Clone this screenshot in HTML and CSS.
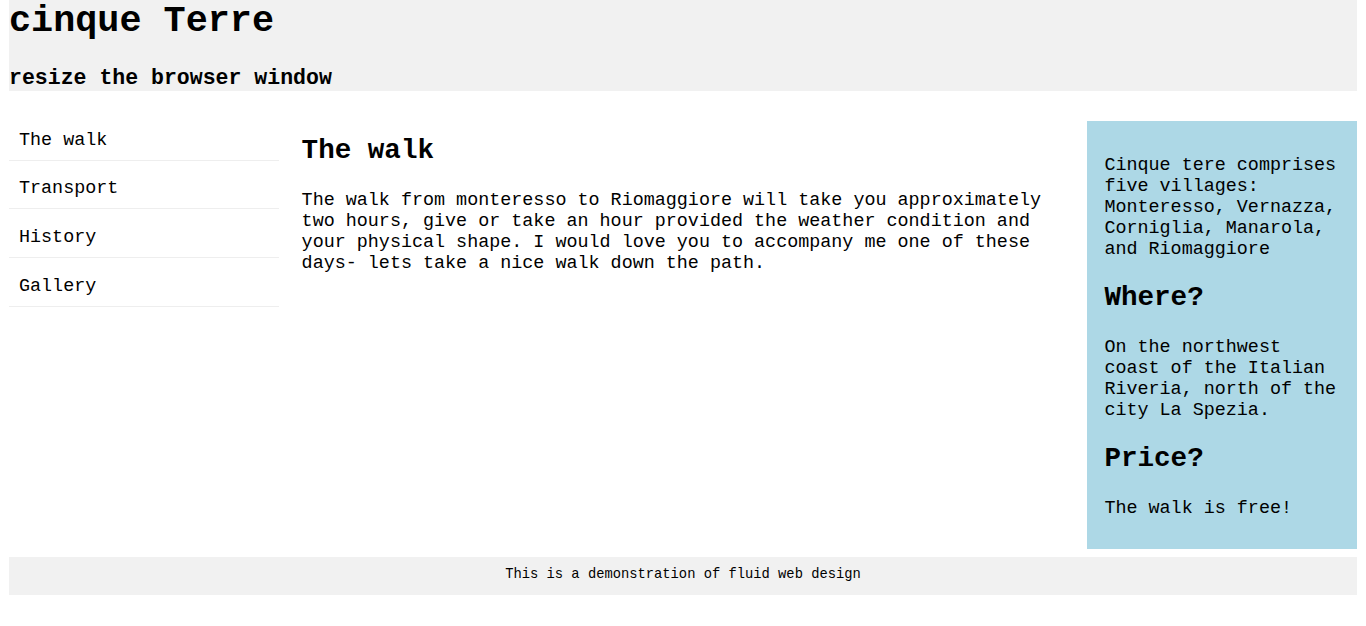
FILE: index.html
```
<!DOCTYPE html>
<html lang="en">
<head>
<meta charset="utf-8">
<title>Cinque Terre</title>
<link rel="stylesheet" href="styles.css">
</head>
<body>
<header class="header">
  <h1 class="title">cinque Terre</h1>
  <h3 class="subtitle">resize the browser window</h3>
</header>
<div class="row">
  <nav class="menu">
    <ul class="menu-list">
      <li class="menu-item">The walk</li>
      <li class="menu-item">Transport</li>
      <li class="menu-item">History</li>
      <li class="menu-item">Gallery</li>
    </ul>
  </nav>
  <main class="main">
    <h2 class="heading">The walk</h2>
    <p class="text">The walk from monteresso to Riomaggiore will take you approximately two hours, give or take an hour provided the weather condition and your physical shape. I would love you to accompany me one of these days- lets take a nice walk down the path.</p>
  </main>
  <aside class="aside">
    <p class="text">Cinque tere comprises five villages: Monteresso, Vernazza, Corniglia, Manarola, and Riomaggiore</p>
    <h2 class="heading">Where?</h2>
    <p class="text">On the northwest coast of the Italian Riveria, north of the city La Spezia.</p>
    <h2 class="heading">Price?</h2>
    <p class="text last">The walk is free!</p>
  </aside>
</div>
<footer class="footer">
  <p class="footer-text">This is a demonstration of fluid web design</p>
</footer>
</body>
</html>
```
FILE: styles.css
```
* {
  box-sizing: border-box;
}

body {
  margin: 0 9px 8px;
  font-family: "Liberation Mono", "Courier New", monospace;
  font-size: 18.4px;
  color: #000;
  background: #fff;
}

.header {
  background-color: #f1f1f1;
  padding: 0 0 1px;
}

.title {
  font-size: 2em;
  margin: 0 0 23.5px;
}

.subtitle {
  font-size: 1.17em;
  margin: 0;
}

.row {
  display: grid;
  grid-template-columns: 20% 60% 20%;
  margin-top: 30px;
  align-items: start;
}

.menu-list {
  list-style: none;
  margin: 0;
  padding: 0;
}

.menu-item {
  padding: 9px 10px 9px;
  margin-bottom: 8.9px;
  border-bottom: 1px solid #eeeeee;
}

.main {
  padding: 0 23px;
}

.heading {
  font-size: 1.5em;
  margin: 22.2px 0 23.6px;
}

.main .heading {
  margin: 14px 0 24px;
}

.text {
  margin: 1em 0;
}

.aside {
  background-color: #add8e6;
  padding: 16.3px 15px 15.7px 17px;
}

.aside .last {
  margin-bottom: 15px;
}

.footer {
  margin-top: 8px;
  background-color: #f1f1f1;
  padding: 9.6px 0 13.4px;
  text-align: center;
}

.footer-text {
  margin: 0;
  font-size: 0.75em;
}
```
